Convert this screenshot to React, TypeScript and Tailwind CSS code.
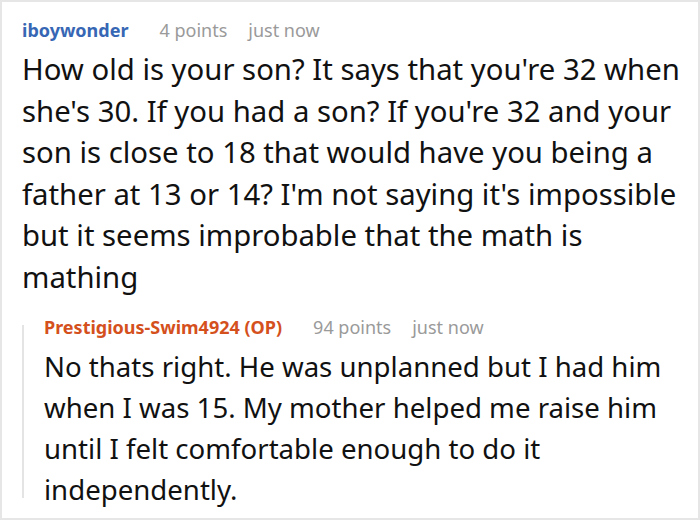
export default function App() {
  return (
    <div
      className="h-[520px] w-[700px] overflow-hidden border-2 border-[#e6e6e6] bg-white pl-[20px] pr-2 pt-[14px]"
      style={{ fontFamily: '"Noto Sans", sans-serif' }}
    >
      <div className="flex items-center text-[18px] leading-[28px]">
        <span className="font-bold text-[#3767b4]">iboywonder</span>
        <span className="ml-[31px] text-[#9a9a9a]">4 points</span>
        <span className="ml-[21px] text-[#9a9a9a]">just now</span>
      </div>
      <p className="mt-[5px] text-[29.3px] leading-[41.6px] text-[#111]">
        How old is your son? It says that you're 32 when she's 30. If you had a son? If you're 32 and your son is close to 18 that would have you being a father at 13 or 14? I'm not saying it's impossible but it seems improbable that the math is mathing
      </p>

      <div className="mt-[14px] flex">
        <div className="my-[12px] w-[2px] shrink-0 bg-[#e4e4e4]" />
        <div className="pl-[20px]">
          <div className="flex items-center text-[18px] leading-[28px]">
            <span className="font-bold text-[#d4501c]">Prestigious-Swim4924 (OP)</span>
            <span className="ml-[31px] text-[#9a9a9a]">94 points</span>
            <span className="ml-[21px] text-[#9a9a9a]">just now</span>
          </div>
          <p className="mt-[5px] text-[27.6px] leading-[41px] text-[#111]">
            No thats right. He was unplanned but I had him when I was 15. My mother helped me raise him until I felt comfortable enough to do it independently.
          </p>
        </div>
      </div>
    </div>
  );
}
